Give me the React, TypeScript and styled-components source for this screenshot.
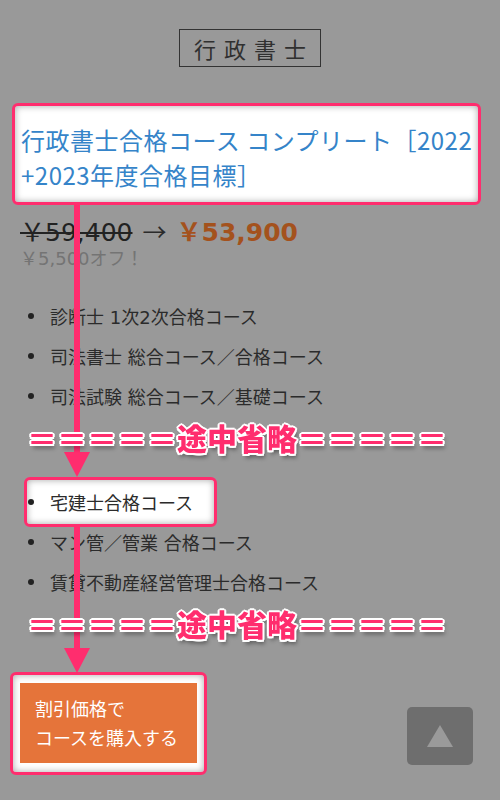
import styled, { createGlobalStyle } from 'styled-components'

const GlobalStyle = createGlobalStyle`
  html, body {
    margin: 0;
    padding: 0;
    background: #999;
  }
  body {
    font-family: 'DejaVu Sans', 'Noto Sans CJK JP', sans-serif;
    color: #2b2b2b;
  }
`

const PINK = '#ff2d6e'
const CJK = `'Noto Sans CJK JP', 'Noto Sans', sans-serif`

const firstGroup = ['診断士 1次2次合格コース', '司法書士 総合コース／合格コース', '司法試験 総合コース／基礎コース']
const secondGroup = [
  { label: '宅建士合格コース', marked: true },
  { label: 'マン管／管業 合格コース', marked: false },
  { label: '賃貸不動産経営管理士合格コース', marked: false },
]

const App = () => {
  return (
    <Page>
      <GlobalStyle />
      <Header>
        <CategoryBox>行政書士</CategoryBox>
      </Header>

      <CourseTitle>
        行政書士合格コース コンプリート［2022
        <br />
        +2023年度合格目標］
      </CourseTitle>

      <PriceRow>
        <OldPrice>￥59,400</OldPrice>
        <span className='arrow'>→</span>
        <NewPrice>￥53,900</NewPrice>
      </PriceRow>
      <Discount>￥5,500オフ！</Discount>

      <CourseList>
        {firstGroup.map((label) => (
          <Item key={label}>{label}</Item>
        ))}
      </CourseList>

      <Omitted $gapBelow={30}>
        ＝＝＝＝＝<b>途中省略</b>＝＝＝＝＝
      </Omitted>

      <CourseList>
        {secondGroup.map(({ label, marked }) => (
          <Item key={label} $marked={marked}>
            {label}
          </Item>
        ))}
      </CourseList>

      <Omitted $gapBelow={34}>
        ＝＝＝＝＝<b>途中省略</b>＝＝＝＝＝
      </Omitted>

      <BuyFrame>
        <BuyButton type='button'>
          割引価格で
          <br />
          コースを購入する
        </BuyButton>
      </BuyFrame>

      <Arrows width='500' height='800' viewBox='0 0 500 800'>
        <rect x='74' y='205' width='6' height='250' fill={PINK} />
        <polygon points='64,452 90,452 77,477' fill={PINK} />
        <rect x='74' y='527' width='6' height='125' fill={PINK} />
        <polygon points='64,648 90,648 77,673' fill={PINK} />
      </Arrows>

      <TopButton type='button' aria-label='ページトップへ'>
        <span />
      </TopButton>
    </Page>
  )
}

export default App

const Page = styled.div`
  position: relative;
  min-height: 800px;
  padding: 0 20px;
  box-sizing: border-box;
  overflow: hidden;
`

const Header = styled.header`
  display: flex;
  justify-content: center;
  padding-top: 29px;
`

const CategoryBox = styled.div`
  display: flex;
  align-items: center;
  justify-content: center;
  width: 142px;
  height: 38px;
  box-sizing: border-box;
  border: 1px solid #333;
  padding-left: 8px;
  font-family: ${CJK};
  font-size: 22px;
  letter-spacing: 8px;
  color: #303030;
`

const CourseTitle = styled.h1`
  margin: 36px 0 0 -8px;
  width: 469px;
  box-sizing: border-box;
  border: 3px solid ${PINK};
  border-radius: 6px;
  background: #fff;
  box-shadow: inset 0 0 7px rgba(0, 0, 0, 0.35);
  padding: 16px 0 10px 6px;
  font-family: ${CJK};
  font-size: 24px;
  font-weight: 400;
  line-height: 35px;
  letter-spacing: 0.5px;
  color: #3584c9;
`

const PriceRow = styled.div`
  display: flex;
  align-items: center;
  gap: 10px;
  margin-top: 8px;
  height: 34px;
  font-size: 25px;
  color: #222;

  .arrow {
    font-family: ${CJK};
    font-size: 24px;
    color: #2b2b2b;
  }
`

const OldPrice = styled.span`
  text-decoration: line-through;
  text-decoration-thickness: 2px;
`

const NewPrice = styled.span`
  font-weight: 700;
  color: #a4521d;
`

const Discount = styled.div`
  font-size: 18px;
  line-height: 24px;
  color: #747474;
`

const CourseList = styled.ul`
  list-style: none;
  margin: 25px 0 0;
  padding: 0;

  & + div {
    margin-top: 6px;
  }
`

const Item = styled.li<{ $marked?: boolean }>`
  display: flex;
  align-items: center;
  height: 40px;
  padding-left: 8px;
  font-size: 18px;
  color: #2b2b2b;

  &::before {
    content: '';
    width: 6px;
    height: 6px;
    border-radius: 50%;
    background: #222;
    margin-right: 16px;
    flex-shrink: 0;
  }

  ${({ $marked }) =>
    $marked &&
    `
    width: fit-content;
    margin: -5px 0 -5px 4px;
    padding: 2px 21px 2px 1px;
    border: 3px solid ${PINK};
    border-radius: 6px;
    background: #fff;
    box-shadow: inset 0 0 7px rgba(0, 0, 0, 0.35);
  `}
`

const Omitted = styled.div<{ $gapBelow: number }>`
  margin: 4px 0 ${({ $gapBelow }) => $gapBelow}px 7px;
  height: 30px;
  line-height: 30px;
  font-family: ${CJK};
  font-size: 30px;
  font-weight: 700;
  color: ${PINK};
  white-space: nowrap;
  position: relative;
  z-index: 2;
  text-shadow:
    2px 0 0 #fff, -2px 0 0 #fff, 0 2px 0 #fff, 0 -2px 0 #fff,
    1.5px 1.5px 0 #fff, -1.5px 1.5px 0 #fff, 1.5px -1.5px 0 #fff, -1.5px -1.5px 0 #fff,
    2px 4px 4px rgba(0, 0, 0, 0.45);

  b {
    font-weight: 900;
  }
`

const BuyFrame = styled.div`
  width: fit-content;
  margin-left: -10px;
  border: 3px solid ${PINK};
  border-radius: 6px;
  background: #fff;
  box-shadow: inset 0 0 7px rgba(0, 0, 0, 0.35);
  padding: 8px 7px 9px 7px;
`

const BuyButton = styled.button`
  display: block;
  width: 177px;
  height: 80px;
  border: none;
  background: #e5743a;
  color: #fff;
  text-align: left;
  padding: 0 0 0 15px;
  font-family: ${CJK};
  font-size: 18px;
  line-height: 29px;
  cursor: pointer;
`

const Arrows = styled.svg`
  position: absolute;
  top: 0;
  left: 0;
  pointer-events: none;
  z-index: 1;
`

const TopButton = styled.button`
  position: fixed;
  right: 27px;
  bottom: 35px;
  width: 66px;
  height: 58px;
  border: none;
  border-radius: 5px;
  background: #6e6e6e;
  display: flex;
  align-items: center;
  justify-content: center;
  padding: 0;
  cursor: pointer;

  span {
    width: 0;
    height: 0;
    border-left: 13px solid transparent;
    border-right: 13px solid transparent;
    border-bottom: 22px solid #9a9a9a;
  }
`
